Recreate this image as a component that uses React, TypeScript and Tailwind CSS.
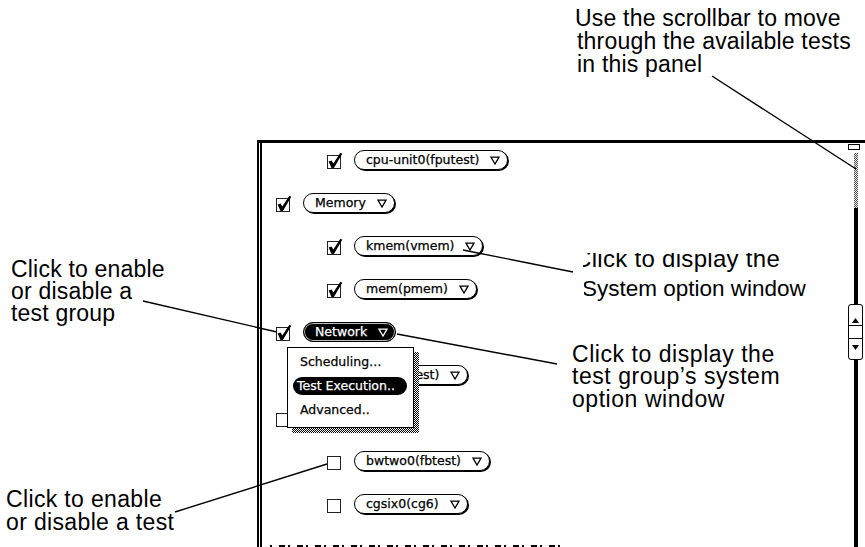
import React from "react";

function Tri({ white }: { white?: boolean }) {
  return (
    <svg width="10" height="9" viewBox="0 0 10 9" className="shrink-0">
      <path d="M1 1.2 L9 1.2 L5 8 Z" fill="none" stroke={white ? "#fff" : "#000"} strokeWidth="1.3" strokeLinejoin="miter" />
    </svg>
  );
}

function Check({ on }: { on?: boolean }) {
  return (
    <svg width="14" height="14" viewBox="0 0 14 14" overflow="visible" className="shrink-0 mb-px">
      <rect x="0.5" y="0.5" width="13" height="13" fill="#fff" stroke="#222" strokeWidth="1" />
      {on ? (
        <path d="M1.6 6.4 L4.6 5.4 L6.3 8.4 L13.4 -2.2 L15.3 -1.2 L6.9 12.9 L4.5 12.9 Z" fill="#000" />
      ) : null}
    </svg>
  );
}

function Pill({ label, dark, hideText }: { label: string; dark?: boolean; hideText?: boolean }) {
  return (
    <div
      className={
        dark
          ? "h-[20px] rounded-full border border-black bg-black text-white shadow-[inset_0_0_0_1px_#bbb] flex items-center pl-[11px] pr-[7px] gap-[11px] text-[12.5px] whitespace-nowrap [-webkit-text-stroke:0.25px_#fff]"
          : "h-[20px] rounded-full border border-black bg-white text-black shadow-[1px_1px_0_#000] flex items-center pl-[11px] pr-[7px] gap-[11px] text-[12.5px] whitespace-nowrap [-webkit-text-stroke:0.25px_#000]"
      }
    >
      {hideText ? <span className="inline-block w-[36px] h-[10px]" /> : <span>{label}</span>}
      <Tri white={dark} />
    </div>
  );
}

function Row({ label, on, group, dark, hideText }: { label: string; on?: boolean; group?: boolean; dark?: boolean; hideText?: boolean }) {
  return (
    <div className={group ? "h-[43px] pl-[14px]" : "h-[43px] pl-[65px]"}>
      <div className="flex items-end gap-[13px]">
        <Check on={on} />
        <Pill label={label} dark={dark} hideText={hideText} />
      </div>
    </div>
  );
}

function Scrollbar() {
  return (
    <div className="w-[15px] mr-[2px] flex flex-col">
      <div className="mt-[1px] h-[6px] w-[12px] border-[1.5px] border-black bg-white" />
      <div className="mt-[3px] ml-[6px] h-[55px] w-[4px] bg-[image:repeating-conic-gradient(#555_0_25%,#e5e5e5_0_50%)] bg-[length:2px_2px]" />
      <div className="ml-[6px] h-[96px] w-[4px] bg-black" />
      <div className="w-[15px] h-[56px] border-[1.5px] border-black rounded-[3px] bg-white flex flex-col">
        <div className="h-[21px] flex items-end justify-center pb-[2px] border-b border-black">
          <svg width="7" height="5" viewBox="0 0 7 5">
            <path d="M0 5 L3.5 0 L7 5 Z" fill="#000" />
          </svg>
        </div>
        <div className="h-[13px] border-b border-black" />
        <div className="flex-1 flex items-start justify-center pt-[6px]">
          <svg width="7" height="5" viewBox="0 0 7 5">
            <path d="M0 0 L7 0 L3.5 5 Z" fill="#000" />
          </svg>
        </div>
      </div>
      <div className="ml-[6px] flex-1 w-[4px] bg-black" />
    </div>
  );
}

function Panel() {
  return (
    <div className="h-[407px] border-t-[3px] border-l-2 border-black flex">
      <div className="ml-px border-l-2 border-black flex-1 flex">
        <div className="flex-1 flex flex-col pt-[7px]">
          <Row label="cpu-unit0(fputest)" on />
          <Row label="Memory" on group />
          <Row label="kmem(vmem)" on />
          <Row label="mem(pmem)" on />
          <Row label="Network" on group dark />
          <Row label="le0(nettest)" on />
          <Row label="Video" group hideText />
          <Row label="bwtwo0(fbtest)" />
          <Row label="cgsix0(cg6)" />
          <div className="mt-[8px] ml-[8px] h-[2px] w-[290px] bg-[image:repeating-linear-gradient(90deg,#000_0_2px,transparent_2px_9px,#000_9px_15px,transparent_15px_18px)]" />
        </div>
        <Scrollbar />
      </div>
    </div>
  );
}

function Menu() {
  return (
    <div className="absolute left-[287px] top-[347px] w-[127px] h-[81px] font-['DejaVu_Sans',sans-serif] text-[12.5px]">
      <div className="absolute left-[5px] top-[5px] w-[127px] h-[81px] bg-[image:repeating-conic-gradient(#000_0_25%,#fff_0_50%)] bg-[length:2px_2px]" />
      <div className="relative h-full bg-white border border-black pt-[2px]">
        <div className="h-[24px] flex items-center pl-[12px] whitespace-nowrap [-webkit-text-stroke:0.25px_#000]">Scheduling…</div>
        <div className="h-[24px] flex items-center pl-[5px] pr-[6px]">
          <div className="h-[18px] w-full rounded-full bg-black text-white flex items-center pl-[4px] whitespace-nowrap [-webkit-text-stroke:0.25px_#fff]">
            Test Execution..
          </div>
        </div>
        <div className="h-[24px] flex items-center pl-[12px] whitespace-nowrap [-webkit-text-stroke:0.25px_#000]">Advanced..</div>
      </div>
    </div>
  );
}

export default function App() {
  const note = "font-['Liberation_Sans',Arial,sans-serif] text-black whitespace-nowrap";
  return (
    <div className="relative w-[865px] h-[547px] overflow-hidden bg-white font-['DejaVu_Sans',sans-serif] text-black">
      <div className="ml-[257px] pt-[140px]">
        <Panel />
      </div>

      <Menu />

      {/* annotations */}
      <div className={"absolute left-[575px] top-[7px] text-[23px] leading-[23px] tracking-[0.2px] " + note}>
        <div>Use the scrollbar to move</div>
        <div className="pl-[2px]">through the available tests</div>
        <div className="pl-[2px]">in this panel</div>
      </div>

      <div className={"absolute left-[11px] top-[257.7px] text-[23px] leading-[22px] tracking-[0.2px] " + note}>
        <div>Click to enable</div>
        <div>or disable a</div>
        <div>test group</div>
      </div>

      <div className={"absolute left-[6px] top-[487.5px] text-[23px] leading-[23px] tracking-[0.35px] " + note}>
        <div>Click to enable</div>
        <div>or disable a test</div>
      </div>

      <div className={"absolute left-[572px] top-[342.5px] text-[23px] leading-[22.5px] tracking-[0.55px] " + note}>
        <div>Click to display the</div>
        <div>test group’s system</div>
        <div>option window</div>
      </div>

      <div className="absolute left-[583px] top-[253px] w-[230px] h-[21px] overflow-hidden">
        <div className={"absolute left-[-9px] top-[-6.5px] text-[24px] leading-[24px] tracking-[0.3px] " + note}>
          Click to display the
        </div>
      </div>
      <div className="absolute left-[584px] top-[277.5px] w-[270px] h-[27px] overflow-hidden">
        <div className={"absolute left-[-2px] top-0 text-[22.5px] leading-[22.5px] " + note}>
          System option window
        </div>
      </div>

      {/* leader lines */}
      <svg className="absolute left-0 top-0 pointer-events-none" width="865" height="547" viewBox="0 0 865 547">
        <g stroke="#000" strokeWidth="1.4" fill="none">
          <line x1="712" y1="76" x2="856" y2="169" />
          <line x1="463" y1="250" x2="573" y2="272" />
          <line x1="397" y1="334" x2="557" y2="364" />
          <line x1="143" y1="301" x2="277" y2="332" />
          <line x1="175" y1="512" x2="327" y2="464" />
        </g>
      </svg>
    </div>
  );
}
